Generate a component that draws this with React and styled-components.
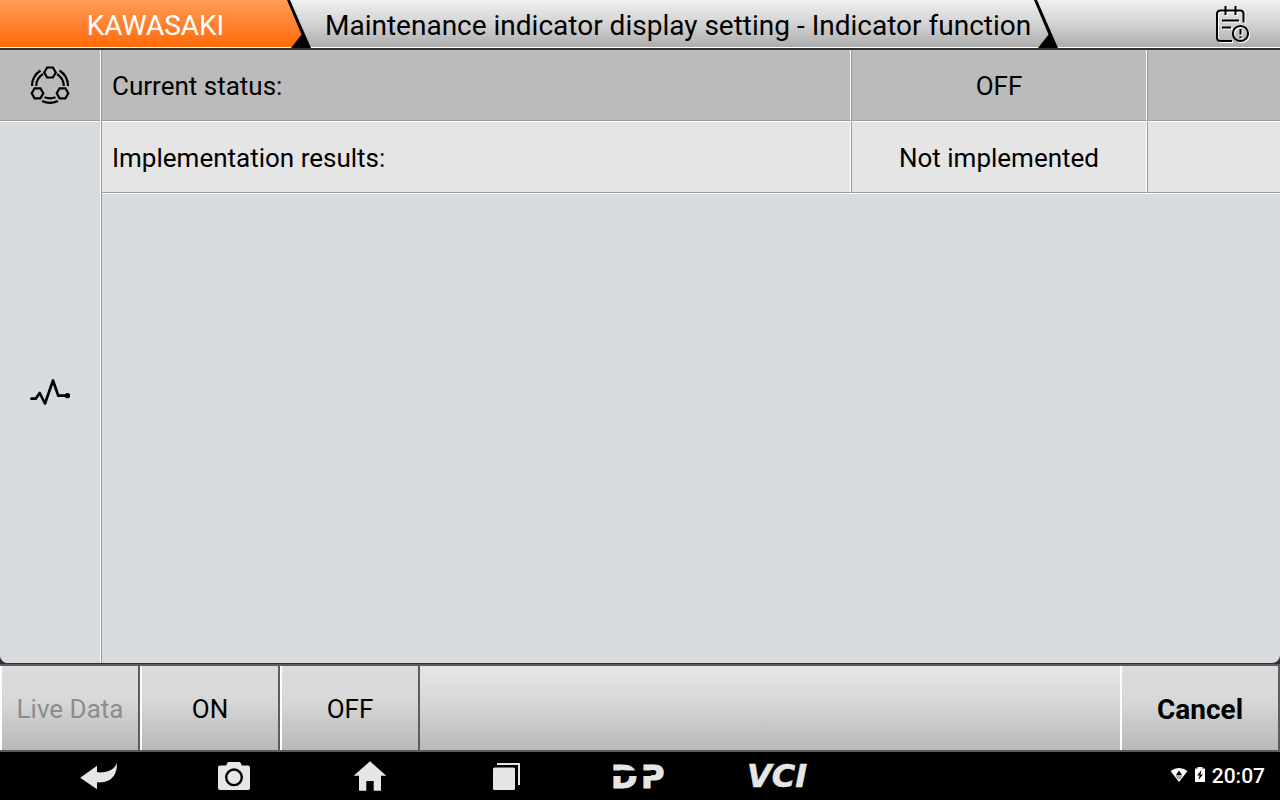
import styled, { createGlobalStyle } from "styled-components";

const GlobalStyle = createGlobalStyle`
  * {
    box-sizing: border-box;
  }

  body {
    margin: 0;
    background: #000;
    font-family: Roboto, "Liberation Sans", sans-serif;
    color: #000;
  }

  button {
    font-family: inherit;
    cursor: pointer;
  }
`;

const Screen = styled.div`
  display: flex;
  flex-direction: column;
  min-height: 100vh;
  background: #2c303c;
`;

/* top bar */
const Header = styled.header`
  display: flex;
  height: 48px;
  margin-bottom: 2px;
  background: linear-gradient(#f0f0f0, #d2d2d2 24px, #adadad 47px, #fff 47px);
`;

const Brand = styled.div`
  display: flex;
  justify-content: center;
  align-items: center;
  width: 287px;
  padding: 2px 0 0 24px;
  font-size: 28px;
  color: #fff;
  background: linear-gradient(#ff9b58, #ff8331 24px, #ff6a08 47px, #fff 47px);
`;

const Title = styled.h1`
  display: flex;
  align-items: center;
  margin: 0;
  padding: 2px 3px 0 14px;
  font-size: 28px;
  font-weight: 400;
  white-space: nowrap;
`;

const Slash = styled.svg`
  flex: none;
  width: 24px;
  height: 48px;
`;

const ReportButton = styled.button`
  display: flex;
  align-items: center;
  margin-left: auto;
  padding: 0 30px;
  border: none;
  background: none;
`;

/* content */
const Body = styled.div`
  display: flex;
  flex: 1;
  margin-bottom: 1px;
  border-radius: 0 0 8px 8px;
  overflow: hidden;
  background: #d7dbde;
`;

const Sidebar = styled.nav`
  display: flex;
  flex-direction: column;
  width: 101px;
  border-right: 1px solid #fff;
`;

const SideTab = styled.button`
  display: flex;
  justify-content: center;
  align-items: center;
  flex: ${(props) => (props.$grow ? "1" : "none")};
  height: ${(props) => (props.$grow ? "auto" : "71px")};
  padding: 0;
  border: none;
  border-top: ${(props) => (props.$grow ? "1px solid #fff" : "none")};
  border-bottom: ${(props) => (props.$grow ? "none" : "1px solid #999")};
  background: ${(props) => (props.$grow ? "#d7dbde" : "#bbb")};
`;

const Main = styled.main`
  flex: 1;
  border-left: 1px solid #999;
`;

const StatusTable = styled.table`
  width: 100%;
  table-layout: fixed;
  border-spacing: 0;
  border-bottom: 1px solid #fff;
  font-size: 26px;
`;

const Col = styled.col`
  width: ${(props) => props.$width || "auto"};
`;

const Row = styled.tr`
  height: ${(props) => (props.$active ? "71px" : "72px")};
  background: ${(props) => (props.$active ? "#bbb" : "#e5e5e5")};

  > * {
    padding: 2px 10px 0;
    font-weight: 400;
    text-align: center;
    border-bottom: 1px solid #999;
    border-top: ${(props) => (props.$active ? "none" : "1px solid #fff")};
  }

  > * + * {
    border-left: 1px solid #999;
  }

  > *:not(:last-child) {
    border-right: 1px solid #fff;
  }

  > th {
    text-align: left;
  }
`;

/* bottom bar */
const ActionBar = styled.div`
  display: flex;
  height: 88px;
  border-top: 2px solid #5c5c5c;
  border-bottom: 2px solid #5c5c5c;
  background: linear-gradient(#e6e6e6, #d8d8d8 40%, #b9b9b9);
`;

const ActionButton = styled.button`
  width: ${(props) => (props.$wide ? "160px" : "140px")};
  margin-left: ${(props) => (props.$wide ? "auto" : "0")};
  padding: 2px 0 0;
  border: none;
  border-left: 2px solid #fff;
  border-right: 2px solid #5c5c5c;
  border-radius: 0;
  font-size: ${(props) => (props.$wide ? "28px" : "26px")};
  font-weight: ${(props) => (props.$wide ? "700" : "400")};
  color: #000;
  background: linear-gradient(#dcdcdc, #d8d8d8 40%, #b8b8b8);

  &:disabled {
    color: #8c8c8c;
  }
`;

/* android navigation */
const SystemBar = styled.footer`
  display: flex;
  align-items: center;
  height: 48px;
  padding: 0 15px 0 30px;
  background: #000;
`;

const NavButton = styled.button`
  display: flex;
  justify-content: center;
  width: 136px;
  padding: 0;
  border: none;
  background: none;
`;

const LogoText = styled.text`
  font-family: "DejaVu Sans", sans-serif;
  font-size: 32px;
  font-weight: 700;
  font-style: ${(props) => (props.$slanted ? "italic" : "normal")};
  fill: #e6e6e6;
`;

const SystemStatus = styled.div`
  display: flex;
  align-items: center;
  gap: 7px;
  margin-left: auto;
  font-size: 21px;
  font-weight: 500;
  color: #fff;
`;

const SlashDivider = ({ filled }) => (
  <Slash viewBox="0 0 24 48" aria-hidden="true">
    {filled && (
      <>
        <defs>
          <linearGradient id="brand" x1="0" y1="0" x2="0" y2="47" gradientUnits="userSpaceOnUse">
            <stop offset="0" stopColor="#ff9b58" />
            <stop offset="0.51" stopColor="#ff8331" />
            <stop offset="1" stopColor="#ff6a08" />
          </linearGradient>
        </defs>
        <path d="M0 0L15 34L5 47H0z" fill="url(#brand)" />
      </>
    )}
    <path d="M0 0H3L24 48H4L14.5 34.5z" fill="#000" />
  </Slash>
);

const reportLines = (
  <>
    <path d="M18 36H6.500Q3 36 3 32.500V9Q3 5.500 6.500 5.500H26Q29.500 5.500 29.500 9V17.500" />
    <path d="M11.500 1V10M21.500 1V10M8 15.500H25M8 22.500H17" />
    <circle cx="26.500" cy="28.500" r="7.600" />
    <path d="M26.500 24V29.500M26.500 31.500V33" />
  </>
);

const ReportIcon = () => (
  <svg width="36" height="38" viewBox="0 0 36 38" fill="none" strokeWidth="2">
    <g stroke="#fff" transform="translate(1 1)">
      {reportLines}
    </g>
    <g stroke="#000">{reportLines}</g>
  </svg>
);

const HEX = "M-5.800 0L-2.900 -5H2.900L5.800 0L2.900 5H-2.900z";

const ModulesIcon = () => (
  <svg width="40" height="40" viewBox="0 -1 40 40" fill="none" stroke="#000" strokeWidth="2.200">
    <path d={HEX} transform="translate(20 6.500)" />
    <path d={HEX} transform="translate(7.500 27.300)" />
    <path d={HEX} transform="translate(32.500 27.300)" />
    <path d="M10.500 4.500A18.500 18.500 0 0 0 2 20M13 8A14.500 14.500 0 0 0 6.200 20" />
    <path d="M29.500 4.500A18.500 18.500 0 0 1 38 20M27 8A14.500 14.500 0 0 1 33.800 20" />
    <path d="M12 35A19 19 0 0 0 28 35M14.500 31.300A15 15 0 0 0 25.500 31.300" />
  </svg>
);

const PulseIcon = () => (
  <svg
    width="40"
    height="32"
    viewBox="0 1 40 32"
    fill="none"
    stroke="#000"
    strokeWidth="2.700"
    strokeLinecap="round"
    strokeLinejoin="round"
  >
    <path d="M1.500 22.700H5.700L9.700 17L15 27.500L23 4.500L28.300 19.700H37" />
    <circle cx="37.500" cy="19.700" r="1.300" fill="#000" />
  </svg>
);

const BackIcon = () => (
  <svg width="40" height="30" viewBox="0 0 40 30" fill="#e6e6e6">
    <path d="M2.200 16.700L19 4.700V11.300C30 12 36 9 38.800 2C39.500 13 34 22.500 19 21.300V28.300z" />
  </svg>
);

const CameraIcon = () => (
  <svg width="40" height="32" viewBox="0 0 40 32" fill="#e6e6e6">
    <path d="M6 5.500H12L14 2H26L28 5.500H34Q36 5.500 36 7.500V28Q36 30 34 30H6Q4 30 4 28V7.500Q4 5.500 6 5.500z" />
    <circle cx="20" cy="17.300" r="7.800" stroke="#000" strokeWidth="2.400" />
  </svg>
);

const HomeIcon = () => (
  <svg width="40" height="32" viewBox="0 0 40 32" fill="#e6e6e6">
    <path d="M20 1.300L36.300 15.700H31V30.700H23.700V21H16.300V30.700H9V15.700H3.700z" />
  </svg>
);

const RecentIcon = () => (
  <svg width="40" height="32" viewBox="0 0 40 32">
    <rect x="7" y="7.500" width="22" height="22.500" rx="1.500" fill="#e6e6e6" />
    <path d="M11 4H33V25" fill="none" stroke="#e6e6e6" strokeWidth="2" />
  </svg>
);

const DpLogo = () => (
  <svg width="64" height="48" viewBox="0 0 64 48">
    <LogoText x="1" y="36" stroke="#e6e6e6">
      D
    </LogoText>
    <LogoText x="31" y="36" stroke="#e6e6e6">
      P
    </LogoText>
    <path d="M0 18.500H30V24H0zM31 18.500H41V24H31z" fill="#000" />
  </svg>
);

const VciLogo = () => (
  <svg width="72" height="48" viewBox="0 0 72 48">
    <LogoText x="5" y="35" stroke="#e6e6e6" strokeWidth="0.500" $slanted>
      VCI
    </LogoText>
  </svg>
);

const WifiIcon = () => (
  <svg width="18" height="18" viewBox="0 0 18 18">
    <path d="M0.500 4Q9 -2 17.500 4L9 15z" fill="#fff" />
    <path d="M9 3.500L12 8H6z" fill="#000" />
    <path d="M6 9H12M7 11H11" stroke="#555" strokeWidth="1" />
  </svg>
);

const BatteryIcon = () => (
  <svg width="10" height="18" viewBox="0 0 10 18">
    <path d="M0 1.500H2.500V0H7.500V1.500H10V15H0z" fill="#fff" />
    <path d="M6.500 3L2 8.500H4.500L3.500 13L8 7.500H5.500z" fill="#000" />
  </svg>
);

const rows = [
  { label: "Current status:", value: "OFF", active: true },
  { label: "Implementation results:", value: "Not implemented", active: false },
];

const navItems = [
  { name: "Back", Icon: BackIcon },
  { name: "Screenshot", Icon: CameraIcon },
  { name: "Home", Icon: HomeIcon },
  { name: "Recent apps", Icon: RecentIcon },
  { name: "DP", Icon: DpLogo },
  { name: "VCI", Icon: VciLogo },
];

const App = () => {
  return (
    <Screen>
      <GlobalStyle />
      <Header>
        <Brand>KAWASAKI</Brand>
        <SlashDivider filled />
        <Title>Maintenance indicator display setting - Indicator function</Title>
        <SlashDivider />
        <ReportButton aria-label="Report">
          <ReportIcon />
        </ReportButton>
      </Header>

      <Body>
        <Sidebar>
          <SideTab aria-label="Modules">
            <ModulesIcon />
          </SideTab>
          <SideTab $grow aria-label="Signals">
            <PulseIcon />
          </SideTab>
        </Sidebar>
        <Main>
          <StatusTable>
            <colgroup>
              <Col />
              <Col $width="296px" />
              <Col $width="133px" />
            </colgroup>
            <tbody>
              {rows.map((row) => (
                <Row key={row.label} $active={row.active}>
                  <th scope="row">{row.label}</th>
                  <td>{row.value}</td>
                  <td />
                </Row>
              ))}
            </tbody>
          </StatusTable>
        </Main>
      </Body>

      <ActionBar>
        <ActionButton disabled>Live Data</ActionButton>
        <ActionButton>ON</ActionButton>
        <ActionButton>OFF</ActionButton>
        <ActionButton $wide>Cancel</ActionButton>
      </ActionBar>

      <SystemBar>
        {navItems.map(({ name, Icon }) => (
          <NavButton key={name} aria-label={name}>
            <Icon />
          </NavButton>
        ))}
        <SystemStatus>
          <WifiIcon />
          <BatteryIcon />
          <time>20:07</time>
        </SystemStatus>
      </SystemBar>
    </Screen>
  );
};

export default App;
